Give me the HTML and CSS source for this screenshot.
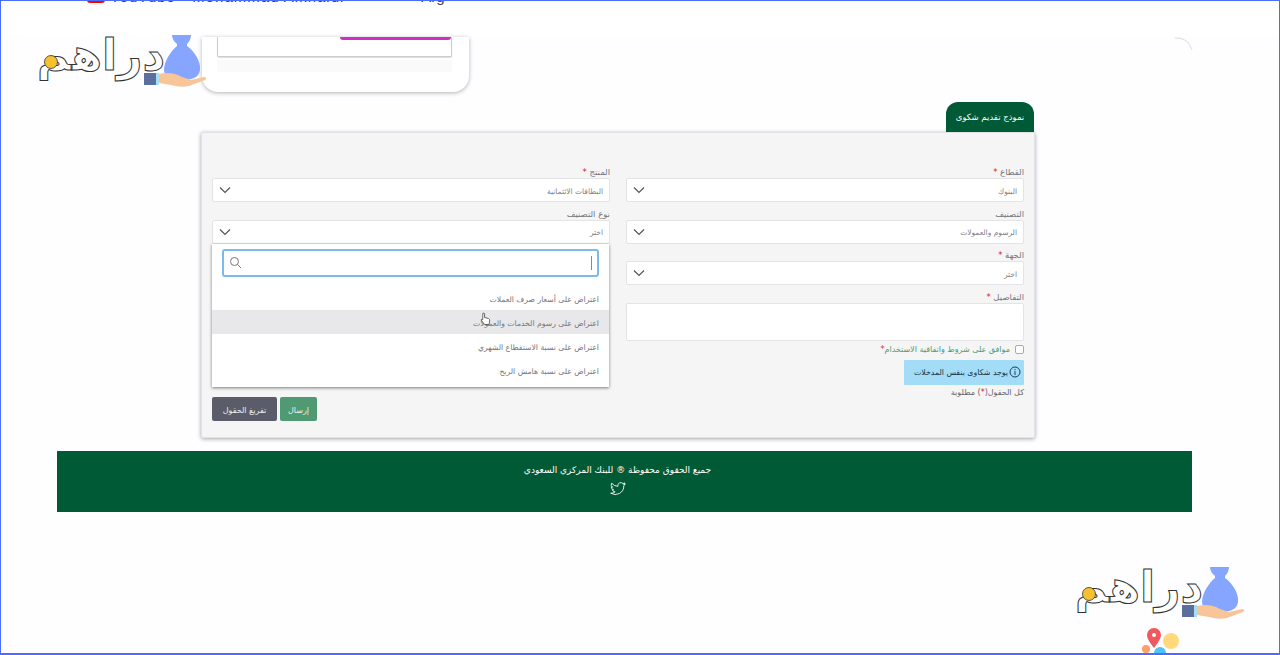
FILE: index.html
```html
<!DOCTYPE html>
<html lang="ar">
<head>
  <meta charset="UTF-8">
  <title>نموذج تقديم شكوى</title>
  <link rel="stylesheet" href="styles.css">
</head>
<body>
  <svg class="defs" width="0" height="0">
    <symbol id="logo-art" viewBox="0 0 172 54">
      <circle cx="15" cy="27" r="6.5" fill="#f7c02e" stroke="#333" stroke-width=".8"/>
      <path fill="#85a5ff" d="M136 0H155Q155 5 151 9V11C158 16 165 26 164 35C163 43 155 45 146 45C136 45 128 42 128 35C128 26 135 16 141 11V9Q136 5 136 0Z"/>
      <path fill="#f7c598" d="M123 39C130 37 140 38 146 42L155 45 168 42Q172 43 169 45L153 51Q145 53 135 50L123 48Z"/>
      <rect x="108" y="38" width="12" height="12" fill="#5a6f9e"/>
      <rect x="120" y="38" width="3" height="12" fill="#a6def2"/>
    </symbol>
    <symbol id="chev" viewBox="0 0 12 8">
      <path d="M1 1.5 6 6.5 11 1.5" fill="none" stroke="#555" stroke-width="1.2"/>
    </symbol>
  </svg>

  <div class="frame">
    <div class="topstrip">
      <span class="yt"></span>
      <span class="yt-title">YouTube - Mohammad Alkhaldi</span>
      <span class="yt-extra">Arg</span>
    </div>

    <div class="page">
      <div class="phone-card">
        <div class="phone-inner"><span class="pink-btn"></span></div>
        <div class="phone-band"></div>
      </div>
      <svg class="spinner" width="20" height="16" viewBox="0 0 20 16"><path d="M1 1Q14 0 18 13" fill="none" stroke="#ddd" stroke-width="1"/></svg>

      <div class="tab-row" dir="rtl"><div class="tab">نموذج تقديم شكوى</div></div>

      <form class="card" dir="rtl">
        <div class="col">
          <div class="field">
            <label>القطاع <i>*</i></label>
            <div class="select"><span>البنوك</span><svg><use href="#chev"/></svg></div>
          </div>
          <div class="field">
            <label>التصنيف</label>
            <div class="select"><span>الرسوم والعمولات</span><svg><use href="#chev"/></svg></div>
          </div>
          <div class="field">
            <label>الجهة <i>*</i></label>
            <div class="select"><span>اختر</span><svg><use href="#chev"/></svg></div>
          </div>
          <div class="field">
            <label>التفاصيل <i>*</i></label>
            <div class="textarea"></div>
          </div>
          <div class="agree"><span class="box"></span><span class="agree-text">موافق على شروط واتفاقية الاستخدام<i>*</i></span></div>
          <div class="alert">
            <svg width="12" height="12" viewBox="0 0 12 12"><circle cx="6" cy="6" r="5" fill="none" stroke="#1d3f55"/><path d="M6 5.2V9M6 3V4.2" stroke="#1d3f55"/></svg>
            <span>يوجد شكاوى بنفس المدخلات</span>
          </div>
          <div class="note">كل الحقول(<i>*</i>) مطلوبة</div>
        </div>

        <div class="col">
          <div class="field">
            <label>المنتج <i>*</i></label>
            <div class="select"><span>البطاقات الائتمانية</span><svg><use href="#chev"/></svg></div>
          </div>
          <div class="field field-menu">
            <label>نوع التصنيف</label>
            <div class="select"><span>اختر</span><svg><use href="#chev"/></svg></div>
            <div class="menu">
              <div class="search">
                <span class="caret"></span>
                <svg width="13" height="13" viewBox="0 0 13 13"><circle cx="5.5" cy="5.5" r="4" fill="none" stroke="#777"/><path d="M8.5 8.5 12 12" stroke="#777"/></svg>
              </div>
              <ul class="options">
                <li>اعتراض على أسعار صرف العملات</li>
                <li class="active">اعتراض على رسوم الخدمات والعمولات
                  <svg class="hand" width="11" height="14" viewBox="0 0 11 14"><path d="M3 1.2Q4.2.6 4.6 2V5.5L8.5 6.5Q10 7 9.7 9L9 12.5H4.5L1.2 8Q1 6.8 2.800 7.500V2Q2.800 1.400 3 1.200Z" fill="#fff" stroke="#444" stroke-width=".8"/></svg>
                </li>
                <li>اعتراض على نسبة الاستقطاع الشهري</li>
                <li>اعتراض على نسبة هامش الربح</li>
              </ul>
            </div>
          </div>
          <div class="buttons">
            <button type="button" class="btn btn-gray">تفريغ الحقول</button>
            <button type="button" class="btn btn-green">إرسال</button>
          </div>
        </div>
      </form>

      <footer class="footer" dir="rtl">
        <p>جميع الحقوق محفوظة ® للبنك المركزي السعودي</p>
        <svg width="16" height="14" viewBox="0 0 24 20"><path d="M23 2.500a9 9 0 0 1-2.600.8A4.500 4.500 0 0 0 22.400.800a9 9 0 0 1-2.900 1.100 4.500 4.500 0 0 0-7.700 4.100A12.800 12.800 0 0 1 2.500 1.300a4.500 4.500 0 0 0 1.400 6 4.500 4.500 0 0 1-2-.6 4.500 4.500 0 0 0 3.600 4.500 4.500 4.500 0 0 1-2 .1 4.500 4.500 0 0 0 4.200 3.100A9 9 0 0 1 1 16.300 12.800 12.800 0 0 0 20.700 5a9 9 0 0 0 2.300-2.500Z" fill="none" stroke="#fff" stroke-width="1.300"/></svg>
      </footer>
    </div>

    <div class="logo logo-top">
      <span class="logo-word">دراهم</span>
      <svg class="logo-art" width="172" height="54"><use href="#logo-art"/></svg>
    </div>
    <div class="logo logo-bottom">
      <span class="logo-word">دراهم</span>
      <svg class="logo-art" width="172" height="54"><use href="#logo-art"/></svg>
    </div>
    <svg class="pins" width="40" height="30" viewBox="0 0 40 30">
      <circle cx="30" cy="15" r="8" fill="#ffd97a"/>
      <circle cx="5" cy="23" r="4" fill="#ff9f68"/>
      <circle cx="19" cy="27" r="6" fill="#4fc3f7"/>
      <path fill="#f0595f" d="M13 2a7 7 0 0 1 7 7C20 13 16 18 13 22 10 18 6 13 6 9a7 7 0 0 1 7-7Z"/>
      <circle cx="13" cy="9" r="2" fill="#fff"/>
    </svg>
  </div>
</body>
</html>
```

FILE: styles.css
```css
* { box-sizing: border-box; }
html, body { margin: 0; background: #fff; }
body { font-family: "DejaVu Sans", "Noto Sans", sans-serif; color: #6b6b70; }
.defs { display: block; height: 0; }
i { font-style: normal; color: #d8232a; }

.frame { position: relative; width: 1280px; height: 655px; border: 1px solid #4a6cff; border-bottom-width: 2px; overflow: hidden; background: #fefdff; }

.topstrip { height: 36px; padding-left: 86px; display: flex; align-items: flex-start; gap: 5px; overflow: hidden; background: #fff; font-family: "Liberation Sans", sans-serif; font-size: 15px; line-height: 16px; color: #444; }
.yt { width: 18px; height: 12px; margin-top: -10px; background: #f00; border-radius: 3px; }
.yt-title { margin-top: -12px; letter-spacing: 1px; }
.yt-extra { margin-top: -12px; margin-left: 72px; }

.page { margin-left: 56px; width: 1135px; height: 616px; background: #fefdff; position: relative; }

.phone-card { margin-left: 145px; width: 267px; height: 55px; padding: 0 17px 0 15px; background: #fff; border-radius: 0 0 16px 16px; box-shadow: 0 1px 4px rgba(0,0,0,.3); }
.phone-inner { height: 20px; border: 1px solid #ccc; border-top: 0; border-radius: 0 0 2px 2px; display: flex; justify-content: flex-end; background: #fff; box-shadow: 0 1px 1px #ddd; }
.pink-btn { width: 111px; height: 3px; background: #d42bc9; border-radius: 0 0 3px 3px; }
.phone-band { height: 12px; margin-top: 3px; background: #fafafa; }

.spinner { position: absolute; top: 0; right: -2px; }

.tab-row { margin: 10px 158px 0 0; height: 30px; display: flex; }
.tab { width: 88px; height: 30px; background: #005a36; color: #fff; border-radius: 12px 12px 0 0; font-size: 8.500px; line-height: 31px; text-align: center; }

.card { margin-left: 144px; width: 834px; height: 306px; padding: 33px 10px 16px; background: #f5f5f6; border: 1px solid #e2e2e4; border-radius: 2px; box-shadow: 0 1px 4px rgba(0,0,0,.35); display: grid; grid-template-columns: 398px 398px; column-gap: 16px; }
.col { display: flex; flex-direction: column; }

.field label { display: block; height: 12px; font-size: 8.500px; line-height: 13px; color: #77777b; }
.field + .field { margin-top: 5.500px; }
.select { height: 24px; padding: 0 6px; display: flex; align-items: center; justify-content: space-between; background: #fff; border: 1px solid #e4e4e6; border-radius: 2px; font-size: 7.500px; color: #808084; }
.select span { margin-top: 2px; }
.select svg { width: 12px; height: 8px; }
.textarea { height: 38px; background: #fff; border: 1px solid #e4e4e6; border-radius: 2px; }

.agree { margin-top: 3px; height: 12px; display: flex; align-items: center; gap: 5px; font-size: 8px; color: #4f9a72; }
.box { width: 9px; height: 9px; background: #fff; border: 1px solid #aaa; border-radius: 2px; }
.alert { margin-top: 4px; width: 120px; height: 25px; padding: 0 3px; display: flex; align-items: center; gap: 1px; background: #a3dcf7; border-radius: 1px; font-size: 7.800px; white-space: nowrap; color: #16344a; }
.note { margin-top: 2px; font-size: 8px; line-height: 12px; color: #66666a; }

.field-menu { position: relative; }
.menu { position: absolute; top: 36px; left: 0; right: 1px; height: 143px; padding-top: 5px; background: #fff; box-shadow: 0 1px 3px rgba(0,0,0,.5); z-index: 2; }
.search { margin: 0 10px; height: 28px; padding: 0 5px; display: flex; align-items: center; justify-content: space-between; background: #fff; border: 2px solid #7db9ec; border-radius: 3px; }
.caret { width: 1px; height: 14px; background: #888; }
.options { margin: 9px 0 0; padding: 0; list-style: none; }
.options li { position: relative; height: 24px; padding: 0 10px; font-size: 7.700px; line-height: 28px; color: #77777b; }
.options .active { background: #e8e8ea; }
.hand { position: absolute; top: 2px; left: 268px; }

.buttons { margin-top: auto; display: flex; gap: 3px; direction: ltr; }
.btn { height: 24px; padding: 3px 0 0; border: 0; border-radius: 2px; color: #f0f0f0; font: 8px "DejaVu Sans", sans-serif; }
.btn-gray { width: 65px; background: #5a5c69; }
.btn-green { width: 37px; background: #4f9a72; }

.footer { margin-top: 13px; height: 61px; padding: 12px 14px 0 0; background: #005a36; color: #fff; text-align: center; }
.footer p { margin: 0 0 5px; font-size: 9px; line-height: 14px; }
.footer svg { display: block; margin: 0 auto; }

.logo { position: absolute; width: 172px; height: 54px; z-index: 3; }
.logo-top { left: 35px; top: 34px; }
.logo-bottom { left: 1073px; top: 566px; }
.logo-art { position: absolute; left: 0; top: 0; }
.logo-word { position: absolute; left: 0; top: -4px; width: 130px; font-family: "DejaVu Sans", sans-serif; font-weight: 700; font-size: 44px; line-height: 48px; text-align: center; direction: rtl; color: #fff; -webkit-text-stroke: 1px #333; }

.pins { position: absolute; left: 1140px; top: 625px; }
```
